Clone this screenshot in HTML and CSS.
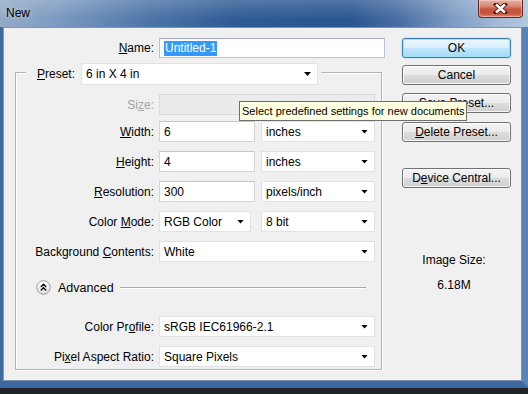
FILE: index.html
```
<!DOCTYPE html>
<html>
<head>
<meta charset="utf-8">
<link rel="stylesheet" href="styles.css">
</head>
<body>
<div class="window">
  <div class="titlebar">
    <span class="title">New</span>
    <div class="close">
      <svg width="15" height="11" viewBox="0 0 15 11"><path d="M3 1.5 L12 9.5 M12 1.5 L3 9.5" stroke="#4a1a12" stroke-width="4.2" stroke-linecap="square" fill="none"/><path d="M3 1.5 L12 9.5 M12 1.5 L3 9.5" stroke="#ffffff" stroke-width="2.4" fill="none"/></svg>
    </div>
  </div>
  <div class="frame">
    <div class="client">
      <div class="left">
        <div class="row name-row">
          <span class="lbl lbl-name"><u>N</u>ame:</span>
          <div class="input name-input"><span class="sel">Untitled-1</span></div>
        </div>
        <div class="group">
          <div class="legend">
            <span class="legend-lbl"><u>P</u>reset:</span>
            <div class="select preset-select"><span>6 in X 4 in</span><i class="arrow"></i></div>
          </div>
          <div class="rows">
            <div class="row size-row">
              <span class="lbl disabled">Si<u>z</u>e:</span>
              <div class="input disabled-field full"></div>
            </div>
            <div class="row">
              <span class="lbl"><u>W</u>idth:</span>
              <div class="input num">6</div>
              <div class="select unit"><span>inches</span><i class="arrow"></i></div>
            </div>
            <div class="row">
              <span class="lbl"><u>H</u>eight:</span>
              <div class="input num">4</div>
              <div class="select unit"><span>inches</span><i class="arrow"></i></div>
            </div>
            <div class="row">
              <span class="lbl"><u>R</u>esolution:</span>
              <div class="input num">300</div>
              <div class="select unit"><span>pixels/inch</span><i class="arrow"></i></div>
            </div>
            <div class="row">
              <span class="lbl">Color <u>M</u>ode:</span>
              <div class="select mode"><span>RGB Color</span><i class="arrow"></i></div>
              <div class="select unit"><span>8 bit</span><i class="arrow"></i></div>
            </div>
            <div class="row">
              <span class="lbl">Background <u>C</u>ontents:</span>
              <div class="select full"><span>White</span><i class="arrow"></i></div>
            </div>
            <div class="adv">
              <svg class="adv-icon" width="15" height="15" viewBox="0 0 15 15">
                <defs><linearGradient id="g" x1="0" y1="0" x2="0" y2="1"><stop offset="0" stop-color="#ffffff"/><stop offset="1" stop-color="#dcdcdc"/></linearGradient></defs>
                <circle cx="7.5" cy="7.5" r="6.8" fill="url(#g)" stroke="#9c9c9c" stroke-width="1"/>
                <path d="M4.8 7 L7.5 4.3 L10.2 7 M4.8 10.4 L7.5 7.7 L10.2 10.4" stroke="#111" stroke-width="1.4" fill="none"/>
              </svg>
              <span class="adv-text">Advanced</span>
              <span class="adv-line"></span>
            </div>
            <div class="row after-adv">
              <span class="lbl">Color Pr<u>o</u>file:</span>
              <div class="select full"><span>sRGB IEC61966-2.1</span><i class="arrow"></i></div>
            </div>
            <div class="row">
              <span class="lbl">Pi<u>x</u>el Aspect Ratio:</span>
              <div class="select full"><span>Square Pixels</span><i class="arrow"></i></div>
            </div>
          </div>
        </div>
      </div>
      <div class="right">
        <div class="btn default">OK</div>
        <div class="btn b-cancel">Cancel</div>
        <div class="btn b-save">Sa<u>v</u>e Preset...</div>
        <div class="btn b-delete"><u>D</u>elete Preset...</div>
        <div class="btn b-device">D<u>e</u>vice Central...</div>
        <div class="info info-title">Image Size:</div>
        <div class="info info-value">6.18M</div>
      </div>
    </div>
  </div>
  <div class="tooltip">Select predefined settings for new documents</div>
</div>
</body>
</html>
```

FILE: styles.css
```
html, body {
  margin: 0;
  padding: 0;
  background: #1e1e1e;
}
body {
  font-family: "Liberation Sans", Arial, sans-serif;
  font-size: 12px;
  color: #000;
}
.window {
  position: relative;
  width: 528px;
  height: 394px;
  display: flex;
  flex-direction: column;
  overflow: hidden;
  background: #202225;
}
.titlebar {
  height: 27px;
  flex: none;
  display: flex;
  align-items: flex-start;
  background:
    linear-gradient(180deg, rgba(255,255,255,0.18) 0%, rgba(255,255,255,0) 70%),
    linear-gradient(90deg, #93aac8 0%, #7e9cc2 10%, #4d75a8 28%, #2f5b94 45%, #2a5690 66%, #4a70a4 76%, #7e9cc4 86%, #a3b9d7 94%, #b3c7e0 100%);
}
.title {
  margin: 6px 0 0 6px;
  line-height: 14px;
  font-size: 12px;
  color: #000;
  text-shadow: 0 0 6px rgba(255,255,255,0.6);
}
.close {
  margin-left: auto;
  margin-right: 5px;
  width: 45px;
  height: 18px;
  box-sizing: border-box;
  border: 1px solid #5b2a22;
  border-top: none;
  border-radius: 0 0 4px 4px;
  background: linear-gradient(180deg, #e7b2a4 0%, #d88a77 35%, #c6533c 55%, #c8563c 80%, #dc8a6c 100%);
  box-shadow: inset 0 0 0 1px rgba(255,220,210,0.5);
  display: flex;
  align-items: center;
  justify-content: center;
}
.frame {
  height: 361px;
  flex: none;
  box-sizing: border-box;
  border-left: 3px solid #3f6aa1;
  border-right: 6px solid #5a82b6;
  border-bottom: 7px solid #3d69a2;
}
.client {
  height: 100%;
  box-sizing: border-box;
  border: 1px solid #8194ac;
  background: #f0f0f0;
  display: flex;
  padding-top: 10px;
}
.left {
  width: 385px;
  flex: none;
}
.row {
  display: flex;
  align-items: center;
  height: 21px;
}
.lbl {
  width: 138px;
  margin-right: 5px;
  text-align: right;
  white-space: nowrap;
  flex: none;
}
.lbl-name {
  width: 150px;
}
.name-row {
  height: 20px;
}
.disabled {
  color: #a3a3a3;
}
.input {
  box-sizing: border-box;
  height: 21px;
  background: #fff;
  border: 1px solid #d3d5d9;
  border-top-color: #c2c5cb;
  padding-left: 4px;
  display: flex;
  align-items: center;
  white-space: nowrap;
}
.name-input {
  width: 226px;
  height: 20px;
  border-color: #b9c3d1;
  border-top-color: #9fabbd;
}
.sel {
  background: #3399ff;
  color: #fff;
  padding: 1px 1px 1px 1px;
  line-height: 13px;
}
.num {
  width: 96px;
  margin-right: 6px;
}
.disabled-field {
  background: #ebebeb;
  border-color: #d9d9d9;
}
.full {
  width: 216px;
}
.select {
  box-sizing: border-box;
  height: 21px;
  background: #fff;
  border: 1px solid #e2e2e2;
  padding-left: 4px;
  display: flex;
  align-items: center;
  white-space: nowrap;
}
.unit {
  width: 114px;
}
.mode {
  width: 92px;
  margin-right: 10px;
}
.arrow {
  display: block;
  width: 7px;
  height: 4px;
  margin-left: auto;
  margin-right: 6px;
  background: #000;
  clip-path: polygon(0 0, 100% 0, 50% 100%);
}
.group {
  margin: 14px 0 0 11px;
  width: 367px;
  height: 298px;
  box-sizing: border-box;
  border: 1px solid #b4b4b4;
  box-shadow: 1px 1px 0 #fff, inset 1px 1px 0 #fff;
}
.legend {
  display: flex;
  align-items: center;
  width: max-content;
  height: 22px;
  margin: -10px 0 0 10px;
  padding: 0 3px 0 11px;
  background: #f0f0f0;
}
.legend-lbl {
  width: 39px;
  margin-right: 5px;
  white-space: nowrap;
}
.preset-select {
  width: 237px;
  height: 22px;
}
.rows {
  display: flex;
  flex-direction: column;
  gap: 9px;
  margin-top: 9px;
}
.size-row {
  margin-bottom: -3px;
}
.adv {
  display: flex;
  align-items: center;
  height: 15px;
  margin-top: 9px;
  padding-left: 20px;
  margin-right: 15px;
}
.adv-icon {
  flex: none;
}
.adv-text {
  margin-left: 7px;
  font-size: 12.5px;
}
.adv-line {
  flex: 1;
  height: 1px;
  margin-left: 6px;
  background: #a8a8a8;
  box-shadow: 0 1px 0 #fff;
}
.after-adv {
  margin-top: 12px;
}
.right {
  width: 109px;
  margin-left: 13px;
  flex: none;
  display: flex;
  flex-direction: column;
}
.btn {
  box-sizing: border-box;
  height: 20px;
  border: 1px solid #707070;
  border-radius: 3px;
  background: linear-gradient(180deg, #f3f3f3 0%, #ebebeb 48%, #dddddd 52%, #cfcfcf 100%);
  box-shadow: inset 0 0 0 1px rgba(255,255,255,0.8);
  display: flex;
  align-items: center;
  justify-content: center;
  white-space: nowrap;
  line-height: 14px;
}
.default {
  border-color: #3c7fb1;
  background: linear-gradient(180deg, #eaf6fd 0%, #d9f0fc 48%, #bee6fd 52%, #a7d9f5 100%);
  box-shadow: inset 0 0 0 1px #9fe3fb, 0 0 2px rgba(80,170,230,0.5);
}
.b-cancel { margin-top: 7px; }
.b-save { margin-top: 8px; }
.b-delete { margin-top: 9px; }
.b-device { margin-top: 26px; }
.info {
  text-align: center;
  line-height: 14px;
  padding-right: 5px;
}
.info-title { margin-top: 65px; }
.info-value { margin-top: 11px; }
.tooltip {
  position: absolute;
  left: 239px;
  top: 101px;
  width: 228px;
  height: 20px;
  box-sizing: border-box;
  background: #ffffe1;
  border: 1px solid #6f6f6f;
  font-size: 11px;
  line-height: 18px;
  padding-left: 2px;
  white-space: nowrap;
  color: #000;
}
```
